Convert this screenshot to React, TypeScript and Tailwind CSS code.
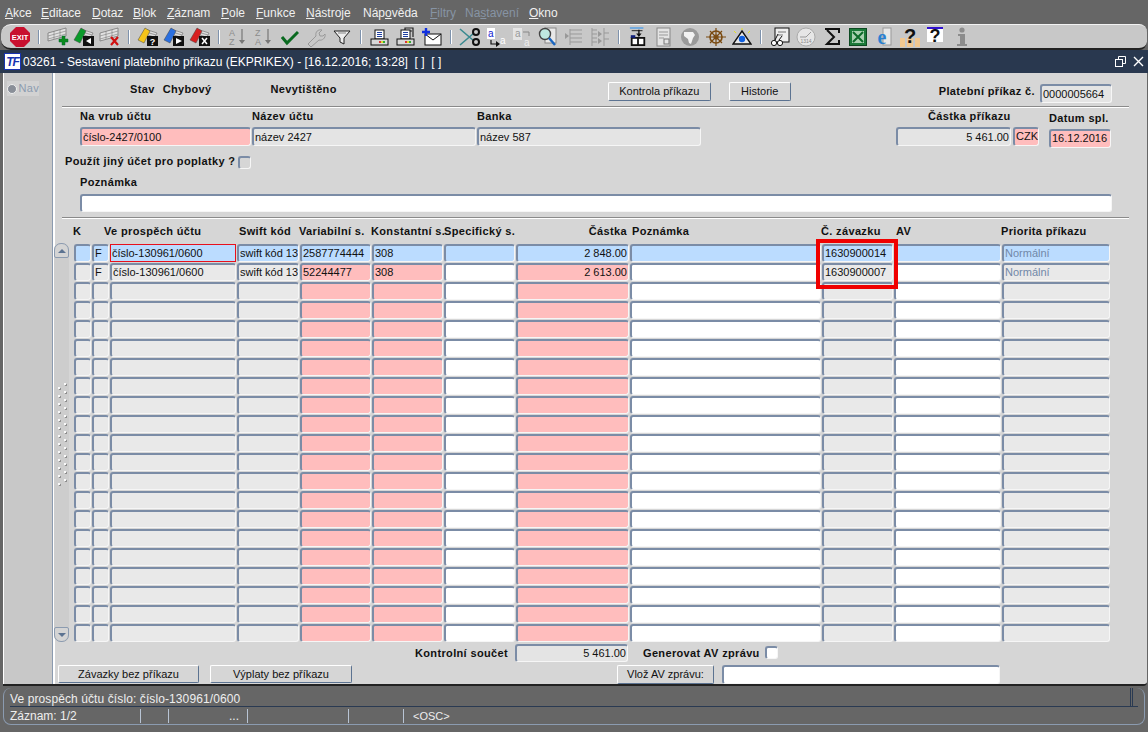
import React from 'react';

const sans = "font-['Liberation_Sans',Arial,sans-serif]";

const menus = [
  { u: 'A', rest: 'kce', w: 'w-[36px]' },
  { u: 'E', rest: 'ditace', w: 'w-[51px]' },
  { u: 'D', rest: 'otaz', w: 'w-[41px]' },
  { u: 'B', rest: 'lok', w: 'w-[34px]' },
  { u: 'Z', rest: 'áznam', w: 'w-[54px]' },
  { u: 'P', rest: 'ole', w: 'w-[35px]' },
  { u: 'F', rest: 'unkce', w: 'w-[50px]' },
  { u: 'N', rest: 'ástroje', w: 'w-[57px]' },
  { pre: 'Náp', u: 'o', rest: 'věda', w: 'w-[67px]' },
  { u: 'F', rest: 'iltry', w: 'w-[35px]', off: true },
  { pre: 'Na', u: 's', rest: 'tavení', w: 'w-[64px]', off: true },
  { u: 'O', rest: 'kno', w: 'w-[40px]' },
];

const Exit = () => (
  <svg width="20" height="20" viewBox="0 0 20 20">
    <polygon points="6,0 14,0 20,6 20,14 14,20 6,20 0,14 0,6" fill="#c8102e" />
    <text x="10" y="13" textAnchor="middle" fontSize="7.5" fontWeight="700" fill="#fff" fontFamily="Liberation Sans">EXIT</text>
  </svg>
);

const Cards = ({ color, mark }: { color: string; mark: React.ReactNode }) => (
  <svg width="22" height="20" viewBox="0 0 22 20">
    <polygon points="8,2 20,6 17,12 5,8" fill="#dcdcdc" stroke="#777" strokeWidth="0.7" />
    <path d="M9 5l10 3M8 7l9 3" stroke="#888" strokeWidth="0.8" />
    <polygon points="1,13 8,1 13,4 7,16" fill={color} stroke="#444" strokeWidth="0.5" />
    <rect x="10" y="9" width="11" height="10" fill="#111" />
    {mark}
  </svg>
);

const Grid = ({ mark }: { mark: React.ReactNode }) => (
  <svg width="22" height="20" viewBox="0 0 22 20">
    <polygon points="1,6 19,1 19,9 1,14" fill="#e2e2e2" stroke="#777" strokeWidth="0.8" />
    <path d="M1 9l18-5M1 12l18-5M7 4v8M13 3v8" stroke="#888" strokeWidth="0.7" />
    {mark}
  </svg>
);

const Sort = ({ a, b }: { a: string; b: string }) => (
  <svg width="20" height="20" viewBox="0 0 20 20" fontFamily="Liberation Sans" fontSize="9" fill="#8c8c8c">
    <text x="1" y="9">{a}</text>
    <text x="1" y="18">{b}</text>
    <path d="M14 2v12" stroke="#777" strokeWidth="1.2" />
    <path d="M11 13h6l-3 4z" fill="#777" />
  </svg>
);

const Printer = ({ stack = false }: { stack?: boolean }) => (
  <svg width="20" height="20" viewBox="0 0 20 20">
    {stack && <path d="M9 3V1h8v9M7 4h9" fill="none" stroke="#222" strokeWidth="1.2" />}
    <rect x="5" y="3" width="9" height="9" fill="#fff" stroke="#111" />
    <path d="M7 5.5h5M7 7.5h5M7 9.5h5" stroke="#1e3fa0" strokeWidth="1" />
    <rect x="1" y="12" width="17" height="6" fill="#d8d8d8" stroke="#111" />
    <rect x="9" y="14" width="2" height="2" fill="#d33" />
    <rect x="11" y="14" width="2" height="2" fill="#dd3" />
    <rect x="13" y="14" width="2" height="2" fill="#3a3" />
  </svg>
);

const icons: Record<string, React.ReactNode> = {
  exit: <Exit />,
  add: <Grid mark={<path d="M15 9h3v3h3v3h-3v3h-3v-3h-3v-3h3z" fill="#0a8a1c" stroke="#063" strokeWidth="0.5" />} />,
  play: <Cards color="#0a9a2a" mark={<path d="M18 11v6l-5-3z" fill="#fff" />} />,
  del: <Grid mark={<path d="M12 10l7 8M19 10l-7 8" stroke="#d01010" strokeWidth="2.2" />} />,
  query: <Cards color="#f5c518" mark={<text x="15.5" y="18" textAnchor="middle" fontSize="9" fontWeight="700" fill="#fff" fontFamily="Liberation Sans">?</text>} />,
  run: <Cards color="#2a6fe0" mark={<path d="M13 11v6l6-3z" fill="#fff" />} />,
  cancel: <Cards color="#d82020" mark={<path d="M13 11l5 6M18 11l-5 6" stroke="#fff" strokeWidth="1.5" />} />,
  az: <Sort a="A" b="Z" />,
  za: <Sort a="Z" b="A" />,
  check: (
    <svg width="18" height="18" viewBox="0 0 18 18">
      <path d="M1 9l5 6L17 4" fill="none" stroke="#0a6a20" strokeWidth="3" />
    </svg>
  ),
  wrench: (
    <svg width="20" height="20" viewBox="0 0 20 20">
      <path d="M2 17l8-8c-1-4 2-7 6-6l-3 3 1 3 3 0 2-2c1 4-3 7-6 6l-8 7z" fill="none" stroke="#999" strokeWidth="1" />
    </svg>
  ),
  filter: (
    <svg width="18" height="18" viewBox="0 0 18 18">
      <path d="M1 3h16l-6 7v6l-4-2v-4z" fill="#eee" stroke="#222" />
      <path d="M5 5h8" stroke="#888" />
    </svg>
  ),
  print: <Printer />,
  prints: <Printer stack />,
  mail: (
    <svg width="20" height="20" viewBox="0 0 20 20">
      <rect x="3" y="7" width="16" height="11" fill="#fff" stroke="#111" />
      <path d="M3 7l8 6 8-6" fill="none" stroke="#111" />
      <path d="M4 1v8M0 5h8" stroke="#1030e0" strokeWidth="2.4" />
    </svg>
  ),
  cut: (
    <svg width="22" height="20" viewBox="0 0 22 20">
      <path d="M1 2l14 12M1 18L15 6" fill="none" stroke="#3a8a90" strokeWidth="1.6" />
      <circle cx="17" cy="5" r="3" fill="none" stroke="#111" strokeWidth="2" />
      <circle cx="17" cy="15" r="3" fill="none" stroke="#111" strokeWidth="2" />
    </svg>
  ),
  copy: (
    <svg width="20" height="20" viewBox="0 0 20 20" fontFamily="Liberation Sans">
      <rect x="1" y="1" width="8" height="11" fill="#fff" />
      <text x="2" y="10" fontSize="10" fill="#1020d0">a</text>
      <path d="M5 13v4h6" fill="none" stroke="#111" strokeWidth="1.2" />
      <path d="M10 14v6l4-3z" fill="#111" />
      <text x="14" y="17" fontSize="10" fill="#fff">a</text>
    </svg>
  ),
  paste: (
    <svg width="20" height="20" viewBox="0 0 20 20" fontFamily="Liberation Sans">
      <rect x="1" y="1" width="9" height="12" fill="#e4e4e4" />
      <text x="3" y="10" fontSize="10" fill="#999">a</text>
      <path d="M11 5h6v4" fill="none" stroke="#888" />
      <text x="12" y="19" fontSize="10" fill="#eee">a</text>
    </svg>
  ),
  zoom: (
    <svg width="20" height="20" viewBox="0 0 20 20">
      <rect x="7" y="1" width="11" height="15" fill="#e8e8e8" stroke="#888" />
      <circle cx="7" cy="7" r="5.5" fill="#bfe8e0" stroke="#444" strokeWidth="1.4" />
      <path d="M11 11l6 7" stroke="#1a66c0" strokeWidth="2.4" />
    </svg>
  ),
  indent: (
    <svg width="20" height="20" viewBox="0 0 20 20">
      <path d="M6 2v16M6 3h12M6 7h12M6 11h12M6 15h12" stroke="#999" strokeWidth="1" fill="none" />
      <path d="M1 6v6l4-3z" fill="#999" />
    </svg>
  ),
  outdent: (
    <svg width="20" height="20" viewBox="0 0 20 20">
      <path d="M2 1v18M2 3h5M2 7h5M2 11h5M2 15h5M14 1v18M14 6h5M14 12h5" stroke="#999" strokeWidth="1" fill="none" />
      <path d="M8 4v6l4-3zM8 11v6l4-3z" fill="#999" />
    </svg>
  ),
  save: (
    <svg width="18" height="20" viewBox="0 0 20 22">
      <path d="M1 1h15" stroke="#6aa8e0" strokeWidth="2" />
      <path d="M3 4h12" stroke="#111" />
      <path d="M11 3v6" stroke="#111" strokeWidth="1.5" />
      <path d="M8 7h6l-3 4z" fill="#111" />
      <rect x="2" y="11" width="16" height="10" fill="#111" />
      <rect x="2" y="9" width="5" height="3" fill="#10207a" />
      <rect x="4" y="13" width="5" height="6" fill="#fff" />
      <rect x="11" y="13" width="5" height="6" fill="#fff" />
    </svg>
  ),
  doc: (
    <svg width="18" height="20" viewBox="0 0 18 20">
      <rect x="2" y="1" width="13" height="18" fill="#e4e4e4" stroke="#888" />
      <path d="M4 5h9M4 8h9M4 11h5" stroke="#999" />
      <rect x="9" y="12" width="5" height="5" fill="none" stroke="#777" />
    </svg>
  ),
  globe: (
    <svg width="20" height="20" viewBox="0 0 20 20">
      <circle cx="10" cy="10" r="9" fill="#9a9a9a" />
      <path d="M4 5h9l2 3-2 3-2 6-2-1-1-4-4-3z" fill="#f2f2f2" />
    </svg>
  ),
  wheel: (
    <svg width="20" height="20" viewBox="0 0 20 20" fill="none" stroke="#7a4a10">
      <circle cx="10" cy="10" r="6" strokeWidth="1.6" />
      <circle cx="10" cy="10" r="2" strokeWidth="1.2" />
      <path d="M0 10h20M10 1v18M4 4l12 12M16 4L4 16" strokeWidth="1.2" />
    </svg>
  ),
  eye: (
    <svg width="20" height="18" viewBox="0 0 20 18">
      <path d="M2 3l2 2M18 3l-2 2M10 0v2" stroke="#e8e020" />
      <path d="M10 3l9 13H1z" fill="#e8e8e8" stroke="#111" strokeWidth="1.4" />
      <circle cx="10" cy="11" r="3.2" fill="#1060e0" />
    </svg>
  ),
  sign: (
    <svg width="20" height="20" viewBox="0 0 20 20">
      <rect x="5" y="1" width="14" height="14" fill="#eee" stroke="#111" />
      <path d="M8 5h8M8 8h5" stroke="#777" />
      <circle cx="4" cy="16" r="2.6" fill="#fff" stroke="#111" />
      <circle cx="10" cy="16" r="2.6" fill="#fff" stroke="#111" />
      <path d="M5 13l3-6M9 13l3-4" stroke="#111" />
    </svg>
  ),
  clock: (
    <svg width="20" height="20" viewBox="0 0 20 20" fontFamily="Liberation Sans">
      <circle cx="10" cy="10" r="9" fill="#e6e6e6" stroke="#aaa" />
      <path d="M4 10h6l5-5" fill="none" stroke="#999" />
      <text x="10" y="16" textAnchor="middle" fontSize="5" fill="#888">1314</text>
    </svg>
  ),
  sigma: (
    <svg width="18" height="18" viewBox="0 0 18 18">
      <path d="M2 1h14v4M4 2l7 7-7 7h12v-4" fill="none" stroke="#111" strokeWidth="2" />
    </svg>
  ),
  excel: (
    <svg width="18" height="18" viewBox="0 0 18 18">
      <rect x="0.5" y="0.5" width="17" height="17" fill="#1c7a3a" stroke="#0d4a22" />
      <rect x="3" y="3" width="12" height="12" fill="#a8d0b0" />
      <path d="M4 4l10 10M14 4L4 14" stroke="#0d6a2a" strokeWidth="2" />
    </svg>
  ),
  ie: (
    <svg width="20" height="20" viewBox="0 0 20 20" fontFamily="Liberation Serif">
      <rect x="9" y="1" width="8" height="17" fill="#e8e8e8" stroke="#999" />
      <text x="8" y="17" textAnchor="middle" fontSize="20" fontWeight="700" fill="#2a80d0">e</text>
    </svg>
  ),
  helpBoxes: (
    <svg width="22" height="22" viewBox="0 0 22 22" fontFamily="Liberation Sans">
      <rect x="1" y="12" width="5" height="9" fill="#f2c890" />
      <rect x="8" y="12" width="6" height="9" fill="#f2c890" />
      <rect x="16" y="12" width="5" height="9" fill="#f2c890" />
      <text x="11" y="17" textAnchor="middle" fontSize="20" fontWeight="700" fill="#111">?</text>
    </svg>
  ),
  help: (
    <svg width="18" height="20" viewBox="0 0 18 20" fontFamily="Liberation Sans">
      <rect x="0" y="1" width="16" height="14" fill="#fff" />
      <rect x="0" y="0" width="16" height="2" fill="#3010d0" />
      <text x="8" y="15" textAnchor="middle" fontSize="18" fontWeight="700" fill="#111">?</text>
    </svg>
  ),
  info: (
    <svg width="14" height="20" viewBox="0 0 14 20">
      <circle cx="7" cy="3" r="2.6" fill="#8c8c8c" />
      <path d="M3 7h7v10h2v2H2v-2h3V9H3z" fill="#8c8c8c" />
    </svg>
  ),
};

const toolbar = [
  ['exit'],
  ['add', 'play', 'del'],
  ['query', 'run', 'cancel'],
  ['az', 'za', 'check', 'wrench', 'filter'],
  ['print', 'prints', 'mail'],
  ['cut', 'copy', 'paste', 'zoom', 'indent', 'outdent'],
  ['save', 'doc', 'globe', 'wheel', 'eye'],
  ['sign', 'clock', 'sigma', 'excel', 'ie', 'helpBoxes', 'help', 'info'],
];

const sunken = 'border-t-2 border-l-2 border-b border-r border-t-[#7b8ca6] border-l-[#7b8ca6] border-b-[#f6f6f6] border-r-[#f6f6f6] rounded-[3px]';
const raised = 'border border-t-white border-l-white border-b-[#5c7391] border-r-[#5c7391] rounded-[2px] bg-[#d6d6d6] text-[11px] text-[#111] flex items-center justify-center';

const Field = ({ className, children }: { className: string; children?: React.ReactNode }) => (
  <div className={`${sunken} flex items-center overflow-hidden whitespace-nowrap text-[11px] leading-none text-[#111] ${className}`}>{children}</div>
);

const Label = ({ className = '', children }: { className?: string; children: React.ReactNode }) => (
  <span className={`text-[11px] leading-none font-bold text-[#111] tracking-[0.35px] whitespace-nowrap ${className}`}>{children}</span>
);

const Check = ({ className }: { className: string }) => <div className={`${sunken} w-[13px] h-[13px] border-t border-l ${className}`} />;

const Hr = () => <div className="ml-[7px] mr-[18px] h-[2px] border-t border-t-[#8a8a8a] border-b border-b-white" />;

const cols = [
  { w: 'w-[17px]', blank: 'bg-[#e9e9e9]' },
  { w: 'w-[17px]', blank: 'bg-[#e9e9e9]' },
  { w: 'w-[126px]', blank: 'bg-[#e9e9e9]' },
  { w: 'w-[62px]', blank: 'bg-[#e9e9e9]' },
  { w: 'w-[71px]', blank: 'bg-[#ffbdbd]' },
  { w: 'w-[71px]', blank: 'bg-[#ffbdbd]' },
  { w: 'w-[71px]', blank: 'bg-white' },
  { w: 'w-[113px]', blank: 'bg-[#ffbdbd]', right: true },
  { w: 'w-[191px]', blank: 'bg-white' },
  { w: 'w-[71px]', blank: 'bg-[#e9e9e9]' },
  { w: 'w-[107px]', blank: 'bg-white' },
  { w: 'w-[108px]', blank: 'bg-[#e9e9e9]', muted: true },
];

const records = [
  ['', 'F', 'číslo-130961/0600', 'swift kód 13', '2587774444', '308', '', '2 848.00', '', '1630900014', '', 'Normální'],
  ['', 'F', 'číslo-130961/0600', 'swift kód 13', '52244477', '308', '', '2 613.00', '', '1630900007', '', 'Normální'],
];

const rows = Array.from({ length: 21 }, (_, i) => i);

const Row = ({ index }: { index: number }) => {
  const data = records[index];
  return (
    <div className="flex gap-[1px] h-[18px] mb-[1px]">
      {cols.map((c, i) => (
        <Field
          key={i}
          className={`${c.w} px-[1px] ${index === 0 ? 'bg-[#bbdcff]' : c.blank} ${c.right ? 'justify-end' : ''} ${c.muted ? 'text-[#7188a8]' : ''} ${index === 0 && i === 2 ? 'border-[#e8101c]! border-[1.5px]! rounded-none!' : ''}`}
        >
          {data ? data[i] : ''}
        </Field>
      ))}
    </div>
  );
};

const dotsRight = Array.from({ length: 13 }, (_, i) => i);

const Scrollbar = () => (
  <div className="relative w-[15px] h-[399px] mt-[-1px] mr-[5px] flex flex-col items-center justify-between bg-[#cdcdcd] rounded-[6px]">
    <div className="w-[15px] h-[15px] rounded-t-[7px] rounded-b-[2px] bg-[#d4d4d4] border border-[#8b9bb0] flex items-center justify-center">
      <div className="w-0 h-0 border-x-[4px] border-x-transparent border-b-[4px] border-b-[#5c7391]" />
    </div>
    {/* splitter dots */}
    <div className="absolute left-[4px] top-[140px] flex gap-[4px]">
      <div className="mt-[4px] flex flex-col gap-[6px]">
        {dotsRight.map(i => <div key={i} className="w-[2px] h-[2px] bg-[#f8f8f8] shadow-[1px_1px_0_#8f8f8f]" />)}
      </div>
      <div className="flex flex-col gap-[6px]">
        {dotsRight.map(i => <div key={i} className="w-[2px] h-[2px] bg-[#f8f8f8] shadow-[1px_1px_0_#8f8f8f]" />)}
      </div>
    </div>
    <div className="w-[15px] h-[15px] rounded-b-[7px] rounded-t-[2px] bg-[#d4d4d4] border border-[#8b9bb0] flex items-center justify-center">
      <div className="w-0 h-0 border-x-[4px] border-x-transparent border-t-[4px] border-t-[#5c7391]" />
    </div>
  </div>
);

const App = () => {
  return (
    <div className={`${sans} w-[1148px] h-[732px] overflow-hidden bg-[#666666] flex flex-col`}>
      {/* menu */}
      <div className="h-[24px] pl-[5px] pt-[1px] flex items-center text-[12px] text-[#f0f0f0]">
        {menus.map((m, i) => (
          <span key={i} className={`${m.w} ${m.off ? 'text-[#8794a4]' : ''}`}>
            {m.pre}<span className="underline">{m.u}</span>{m.rest}
          </span>
        ))}
      </div>

      {/* toolbar */}
      <div className="h-[26px] ml-[1px] mr-[1px] flex items-center pl-[6px] bg-[#c8c8c8] border-t border-t-[#f2f2f2] border-b-2 border-b-[#222] rounded-l-[10px] rounded-r-[8px]">
        {toolbar.map((group, g) => (
          <React.Fragment key={g}>
            {g > 0 && (
              <div className="w-[12px] flex justify-center">
                <div className="w-[2px] h-[14px] bg-[#7f93ad] border-r border-r-white" />
              </div>
            )}
            {group.map(name => (
              <div key={name} className="w-[26px] h-[24px] flex items-center justify-center">
                {icons[name]}
              </div>
            ))}
          </React.Fragment>
        ))}
      </div>

      {/* title */}
      <div className="h-[23px] flex items-center bg-[#29384f] text-[12px] text-white pl-[4px]">
        <div className="w-[17px] h-[17px] mr-[2px] bg-white border border-[#1733b0] flex items-center justify-center text-[12px] leading-none italic font-bold text-[#1733b0]">
          <span className="tracking-[-1px]">TF</span>
        </div>
        <span>03261 - Sestavení platebního příkazu (EKPRIKEX) - [16.12.2016; 13:28]&nbsp; [ ]&nbsp; [ ]</span>
        <div className="ml-auto mr-[4px] flex items-center gap-[7px]">
          <svg width="11" height="11" viewBox="0 0 11 11" fill="none" stroke="#fff">
            <rect x="0.5" y="3.5" width="7" height="7" />
            <path d="M3.5 3V0.5h7v7H8" />
          </svg>
          <svg width="11" height="11" viewBox="0 0 11 11" stroke="#fff" strokeWidth="1.4">
            <path d="M1 1l9 9M10 1l-9 9" />
          </svg>
        </div>
      </div>

      {/* window body */}
      <div className="h-[613px] ml-[3px] mr-[1px] flex bg-[#d6d6d6] border-b-2 border-b-[#222] rounded-br-[4px]">
        <div className="w-[50px] bg-[#c8c8c8] border-l border-l-white border-r border-r-[#8b9bb0] pt-[8px] pl-[3px]">
          <div className="w-[32px] h-[15px] flex items-center gap-[2px] bg-[#d2d2d2] text-[11px] text-[#8b9bb0] tracking-[0.3px]">
            <div className="w-[10px] h-[10px] rounded-full bg-[#8a8f98] border border-[#f0f0f0]" />
            Nav
          </div>
        </div>

        <div className="flex-1 flex flex-col border-l-2 border-l-white">
          {/* header */}
          <div className="h-[33px] flex items-start">
            <Label className="ml-[75px] mt-[11px]">Stav</Label>
            <Label className="ml-[8px] mt-[11px]">Chybový</Label>
            <Label className="ml-[59px] mt-[11px]">Nevytištěno</Label>
            <button className={`${raised} ml-[271px] mt-[9px] w-[103px] h-[19px]`}>Kontrola příkazu</button>
            <button className={`${raised} ml-[18px] mt-[9px] w-[62px] h-[19px]`}>Historie</button>
            <Label className="ml-[148px] mt-[13px]">Platební příkaz č.</Label>
            <Field className="ml-[5px] mt-[11px] w-[72px] h-[19px] pl-[1px] bg-[#e4e4e4]">0000005664</Field>
          </div>
          <Hr />

          {/* account */}
          <div className="h-[47px] flex items-start">
            <div className="ml-[25px] w-[172px] flex flex-col gap-[5px] pt-[3px]">
              <Label>Na vrub účtu</Label>
              <Field className="w-[171px] h-[19px] pl-[1px] pt-[1px] bg-[#ffbdbd]">číslo-2427/0100</Field>
            </div>
            <div className="w-[225px] flex flex-col gap-[5px] pt-[3px]">
              <Label>Název účtu</Label>
              <Field className="w-[224px] h-[19px] pl-[1px] pt-[1px] bg-[#e4e4e4]">název 2427</Field>
            </div>
            <div className="w-[419px] flex flex-col gap-[5px] pt-[3px]">
              <Label>Banka</Label>
              <Field className="w-[224px] h-[19px] pl-[1px] pt-[1px] bg-[#e4e4e4]">název 587</Field>
            </div>
            <div className="w-[153px] flex flex-col gap-[5px] pt-[3px] items-start">
              <Label className="ml-[32px]">Částka příkazu</Label>
              <div className="flex gap-[2px]">
                <Field className="w-[115px] h-[19px] pr-[1px] pt-[1px] justify-end bg-[#e4e4e4]">5 461.00</Field>
                <Field className="w-[26px] h-[19px] pl-[1px] bg-[#ffbdbd]">CZK</Field>
              </div>
            </div>
            <div className="flex flex-col gap-[5px] pt-[5px]">
              <Label>Datum spl.</Label>
              <Field className="w-[62px] h-[19px] pl-[1px] bg-[#ffbdbd]">16.12.2016</Field>
            </div>
          </div>

          {/* fees */}
          <div className="h-[23px] flex items-start pt-[1px] pl-[10px]">
            <Label className="mr-[3px]">Použít jiný účet pro poplatky ?</Label>
            <Check className="bg-[#d6d6d6]" />
          </div>

          {/* note */}
          <div className="h-[40px] ml-[25px] flex flex-col gap-[6px]">
            <Label>Poznámka</Label>
            <Field className="w-[1032px] h-[18px] bg-white" />
          </div>
          <Hr />

          {/* grid header */}
          <div className="h-[25px] pl-[18px] flex items-center">
            <Label className="w-[31px]">K</Label>
            <Label className="w-[135px]">Ve prospěch účtu</Label>
            <Label className="w-[60px]">Swift kód</Label>
            <Label className="w-[72px]">Variabilní s.</Label>
            <Label className="w-[73px]">Konstantní s.</Label>
            <Label className="w-[72px]">Specifický s.</Label>
            <Label className="w-[111px] text-right">Částka</Label>
            <Label className="ml-[5px] w-[189px]">Poznámka</Label>
            <Label className="w-[75px]">Č. závazku</Label>
            <Label className="w-[105px]">AV</Label>
            <Label>Priorita příkazu</Label>
          </div>

          {/* grid */}
          <div className="flex -ml-[1px] relative">
            <Scrollbar />
            <div className="flex flex-col">
              {rows.map(i => <Row key={i} index={i} />)}
            </div>
            {/* annotation over the závazek cells */}
            <div className="absolute left-[762px] top-[-5px] w-[82px] h-[50px] border-[4px] border-[#f00000]" />
          </div>

          {/* footer */}
          <div className="h-[22px] flex items-start">
            <Label className="ml-[360px] mt-[5px]">Kontrolní součet</Label>
            <Field className="ml-[7px] mt-[1px] w-[113px] h-[18px] justify-end pr-[1px] bg-[#e4e4e4]">5 461.00</Field>
            <Label className="ml-[15px] mt-[5px]">Generovat AV zprávu</Label>
            <div className="ml-[5px] mt-[3px]"><Check className="bg-white" /></div>
          </div>
          <div className="flex items-start">
            <button className={`${raised} ml-[3px] w-[141px] h-[18px]`}>Závazky bez příkazu</button>
            <button className={`${raised} ml-[11px] w-[142px] h-[18px]`}>Výplaty bez příkazu</button>
            <button className={`${raised} ml-[265px] w-[97px] h-[19px]`}>Vlož AV zprávu:</button>
            <Field className="ml-[8px] w-[278px] h-[19px] bg-white" />
          </div>
        </div>
      </div>

      {/* status */}
      <div className="mt-[2px] ml-[3px] mr-[3px] h-[37px] border-l border-r border-b border-[#8b9bb0] rounded-[8px] border-t-0 text-[12px] text-[#eeeeee] flex flex-col">
        <div className="h-[19px] mx-[6px] flex border-b border-b-[#2a3a52]">
          <span className="pt-[2px] tracking-[0.1px]">Ve prospěch účtu číslo: číslo-130961/0600</span>
          <div className="ml-auto mr-[5px] w-[3px] h-full border-x border-x-[#2a3a52]" />
        </div>
        <div className="h-[17px] mx-[6px] flex items-center">
          <span className="w-[131px] h-[14px] border-r border-r-[#b8c4d4] leading-[14px]">Záznam: 1/2</span>
          <span className="w-[28px] h-[14px] border-r border-r-[#b8c4d4]" />
          <span className="w-[79px] h-[14px] border-r border-r-[#b8c4d4] text-right pr-[8px] leading-[14px]">...</span>
          <span className="w-[101px] h-[14px] border-r border-r-[#b8c4d4]" />
          <span className="w-[55px] h-[14px] border-r border-r-[#b8c4d4]" />
          <span className="pl-[9px] text-[11px] leading-[14px]">&lt;OSC&gt;</span>
        </div>
      </div>
    </div>
  );
};

export default App;
